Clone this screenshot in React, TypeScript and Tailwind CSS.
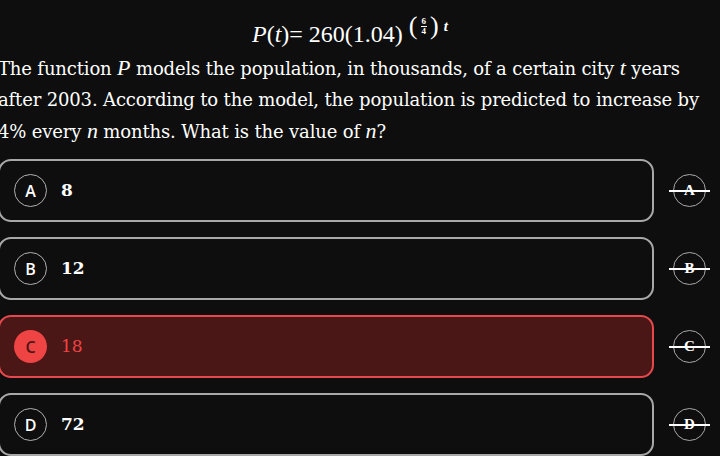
import React from "react"

const options = [
  { letter: "A", value: "8" },
  { letter: "B", value: "12" },
  { letter: "C", value: "18", selected: true },
  { letter: "D", value: "72" },
]

const serif = { fontFamily: '"DejaVu Serif", "Liberation Serif", serif' }
const math = { fontFamily: '"Liberation Serif", "DejaVu Serif", serif' }

export default function App() {
  return (
    <div className="w-[720px] h-[456px] overflow-hidden bg-[#0e0e0e] text-white" style={serif}>
      {/* Formula */}
      <div className="h-[52px] pt-[20px] pl-[252px] text-[24px] leading-[28px] whitespace-nowrap font-medium" style={math}>
        <span className="italic">P</span>(<span className="italic">t</span>)= 260(1.04)
        <span className="relative -top-[10px] inline-flex items-center ml-[6px] align-middle">
          <span className="text-[26px] leading-none">(</span>
          <span className="flex flex-col items-center text-[9px] leading-[9px] mx-[3px] font-bold">
            <span className="border-b border-white px-[1px]">6</span>
            <span>4</span>
          </span>
          <span className="text-[26px] leading-none">)</span>
          <span className="italic ml-[5px] text-[15px] font-bold">t</span>
        </span>
      </div>

      {/* Question */}
      <p className="-ml-[2px] text-[18px] leading-[31px] tracking-[-0.15px] whitespace-nowrap">
        The function <span className="italic text-[22px]" style={math}>P</span> models the population, in thousands, of a certain city{" "}
        <span className="italic text-[22px]" style={math}>t</span> years
        <br />
        after 2003. According to the model, the population is predicted to increase by
        <br />
        4% every <span className="italic text-[22px]" style={math}>n</span> months. What is the value of{" "}
        <span className="italic text-[22px]" style={math}>n</span>?
      </p>

      {/* Options */}
      <div className="flex flex-col gap-[15px] mt-[12px]">
        {options.map((o) => (
          <div key={o.letter} className="flex items-center">
            <div
              className={
                "-ml-[2px] w-[656px] h-[63px] rounded-[13px] border-2 flex items-center pl-[14px] " +
                (o.selected ? "bg-[#4a1616] border-[#e5484d]" : "border-[#a8a8a8]")
              }
            >
              <div
                className={
                  "w-[33px] h-[33px] rounded-full flex items-center justify-center text-[16px] font-semibold " +
                  (o.selected ? "bg-[#ef4444] text-[#4a1616]" : "border-[1.5px] border-[#b0b0b0] text-white")
                }
                style={{ fontFamily: '"Open Sans", sans-serif' }}
              >
                {o.letter}
              </div>
              <span className={"ml-[14px] text-[17px] " + (o.selected ? "text-[#ef4444]" : "text-white font-semibold")}>
                {o.value}
              </span>
            </div>
            <div className="relative ml-[19px] w-[33px] h-[33px] rounded-full border-[1.5px] border-[#a8a8a8] flex items-center justify-center">
              <span className="text-[15px] font-bold" style={math}>{o.letter}</span>
              <div className="absolute left-[-5px] right-[-5px] top-1/2 h-[2px] -mt-[1px] bg-white" />
            </div>
          </div>
        ))}
      </div>
    </div>
  )
}
